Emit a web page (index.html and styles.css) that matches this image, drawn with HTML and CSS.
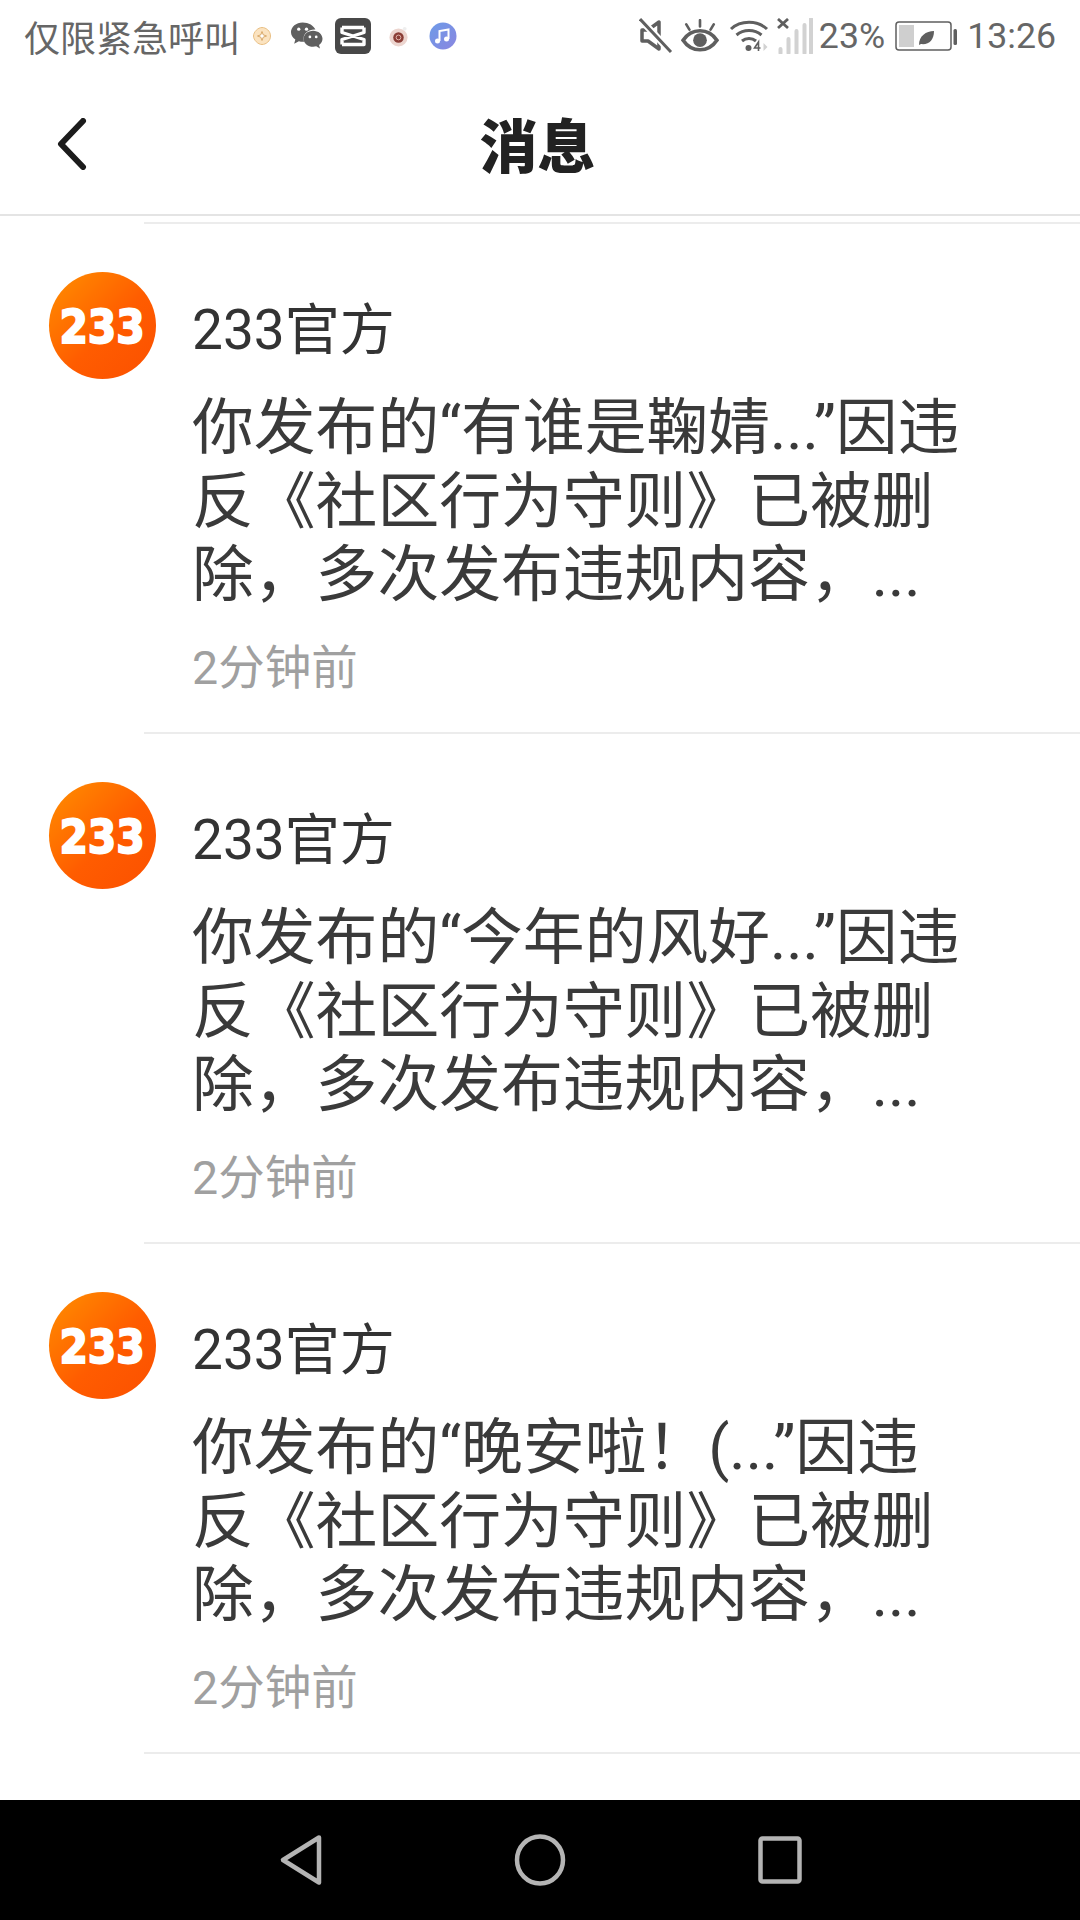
FILE: index.html
```html
<!DOCTYPE html>
<html>

<head>
    <meta charset="UTF-8">
    <meta name="viewport" content="width=device-width, initial-scale=1.0">
    <title>消息</title>
    <link rel="stylesheet" href="styles.css">
</head>

<body>
    <div class="phone">
        <!-- Status bar -->
        <div class="status">
            <div class="status-left">
                <span class="carrier">仅限紧急呼叫</span>
                <svg class="notif coin" viewBox="0 0 20 20">
                    <path d="M10 1.500c4 0 8.500 3.500 8.500 8.500s-4.500 8.500-8.500 8.500S1.500 14 1.500 10 6 1.500 10 1.500z" fill="#fbe3c0" stroke="#e9bf83" stroke-width="1"/>
                    <path d="M10 5.500l1.200 3.300 3.300 1.200-3.300 1.200L10 14.500l-1.200-3.300L5.500 10l3.300-1.200z" fill="#fff" stroke="#d9a867" stroke-width="1"/>
                </svg>
                <svg class="notif wechat" viewBox="0 0 34 30">
                    <path d="M13 1C6.400 1 1 5.400 1 11c0 3.200 1.700 5.800 4.500 7.700L4.300 23l4.900-2.600c1.200.4 2.600.6 3.800.6.500 0 1 0 1.500-.1-.3-1-.5-2-.5-3 0-5.300 4.900-9.500 11-9.500h1.200C24.600 4.300 19.300 1 13 1z" fill="#5f5f5f"/>
                    <path d="M33.500 17.800c0-4.600-4.400-8.300-9.700-8.300s-9.800 3.700-9.800 8.300 4.400 8.300 9.800 8.300c1.100 0 2.200-.2 3.200-.5l3.900 2.200-1-3.600c2.200-1.500 3.600-3.800 3.600-6.400z" fill="#5f5f5f"/>
                    <circle cx="9" cy="8" r="1.700" fill="#fff"/>
                    <circle cx="17" cy="8" r="1.700" fill="#fff"/>
                    <circle cx="20.500" cy="16" r="1.400" fill="#fff"/>
                    <circle cx="27" cy="16" r="1.400" fill="#fff"/>
                </svg>
                <svg class="notif capcut" viewBox="0 0 36 36">
                    <rect width="36" height="36" rx="6" fill="#484848"/>
                    <path d="M7 9.500h22M7 26.500h22v-5L7 14.500v-5M29 9.500v5L7 21.500v5" fill="none" stroke="#fff" stroke-width="3.400" stroke-linejoin="round"/>
                </svg>
                <svg class="notif peach" viewBox="0 0 22 22">
                    <circle cx="11" cy="12" r="9.500" fill="#ecd5cf"/>
                    <circle cx="11" cy="12" r="5.500" fill="#8a3d36"/>
                    <circle cx="11" cy="12" r="2.500" fill="none" stroke="#e3b7ae" stroke-width="1"/>
                    <circle cx="17.500" cy="3" r="2" fill="#eee"/>
                </svg>
                <svg class="notif music" viewBox="0 0 28 28">
                    <defs>
                        <linearGradient id="musicFill" x1="0" y1="0" x2="1" y2="1">
                            <stop offset="0" stop-color="#6d9be8"/>
                            <stop offset="1" stop-color="#8a86e0"/>
                        </linearGradient>
                    </defs>
                    <circle cx="14" cy="14" r="13.500" fill="url(#musicFill)"/>
                    <path d="M10.500 19V9l9-1.500V17" fill="none" stroke="#fff" stroke-width="2"/>
                    <circle cx="8.500" cy="19" r="2.500" fill="#fff"/>
                    <circle cx="17.500" cy="17" r="2.500" fill="#fff"/>
                </svg>
            </div>
            <div class="status-right">
                <svg class="sys mute" viewBox="0 0 34 36">
                    <path d="M3 12h6l11-8v27l-11-8H3z" fill="none" stroke="#5f5f5f" stroke-width="3.500" stroke-linejoin="round"/>
                    <path d="M2 2l30 32" stroke="#fff" stroke-width="7"/>
                    <path d="M1 1l31 33" stroke="#5f5f5f" stroke-width="3"/>
                </svg>
                <svg class="sys eye" viewBox="0 0 36 32">
                    <path d="M2 20c4-6 9.500-9 16-9s12 3 16 9c-4 6-9.500 9-16 9s-12-3-16-9z" fill="none" stroke="#5f5f5f" stroke-width="3.500"/>
                    <circle cx="18" cy="20" r="6.500" fill="#5f5f5f"/>
                    <path d="M18 1v6M5 5l3 5M31 5l-3 5" stroke="#5f5f5f" stroke-width="2.500" stroke-linecap="round"/>
                </svg>
                <svg class="sys wifi" viewBox="0 0 40 34">
                    <path d="M1.500 10C11 1 28 1 37.500 10M7 16c7-6 18-6 25 0M12.500 22c4-3.500 10-3.500 14 0" fill="none" stroke="#5f5f5f" stroke-width="3"/>
                    <circle cx="19" cy="29" r="3" fill="#5f5f5f"/>
                    <path d="M29 32v-9l-4 6h6" fill="none" stroke="#5f5f5f" stroke-width="1.600"/>
                    <path d="M34 24l4 4-4 4z" fill="#d2d2d2"/>
                </svg>
                <svg class="sys signal" viewBox="0 0 36 36">
                    <path d="M1 1l10 9M11 1L1 10" stroke="#5f5f5f" stroke-width="2.800"/>
                    <path d="M3.500 35v-4M11.500 35V21M19.500 35V13M27.500 35V7M34 35V1" stroke="#d2d2d2" stroke-width="4" stroke-linecap="round"/>
                </svg>
                <span class="pct">23%</span>
                <svg class="sys battery" viewBox="0 0 62 30">
                    <rect x="1" y="1" width="55" height="28" rx="3" fill="none" stroke="#5f5f5f" stroke-width="1.500"/>
                    <rect x="4" y="4" width="15" height="22" fill="#cfcfcf"/>
                    <path d="M24 24c0-9 7-14 15-14 0 9-5 14-13 13z" fill="#5f5f5f"/>
                    <rect x="58.500" y="8" width="3.500" height="16" rx="1.500" fill="#5f5f5f"/>
                </svg>
                <span class="clock">13:26</span>
            </div>
        </div>

        <!-- Title bar -->
        <div class="titlebar">
            <svg class="back" viewBox="0 0 32 52">
                <path d="M27 3L5 26l22 23" fill="none" stroke="#1c1c1c" stroke-width="6" stroke-linecap="round" stroke-linejoin="round"/>
            </svg>
            <h1>消息</h1>
        </div>

        <!-- Messages -->
        <div class="list">
            <hr class="rule">

            <div class="item">
                <div class="avatar"><span>233</span></div>
                <div class="content">
                    <div class="name">233官方</div>
                    <div class="body">你发布的“有谁是鞠婧...”因违反《社区行为守则》已被删除，多次发布违规内容，...</div>
                    <div class="time">2分钟前</div>
                </div>
            </div>
            <hr class="rule">

            <div class="item">
                <div class="avatar"><span>233</span></div>
                <div class="content">
                    <div class="name">233官方</div>
                    <div class="body">你发布的“今年的风好...”因违反《社区行为守则》已被删除，多次发布违规内容，...</div>
                    <div class="time">2分钟前</div>
                </div>
            </div>
            <hr class="rule">

            <div class="item">
                <div class="avatar"><span>233</span></div>
                <div class="content">
                    <div class="name">233官方</div>
                    <div class="body">你发布的“晚安啦！(...”因违反《社区行为守则》已被删除，多次发布违规内容，...</div>
                    <div class="time">2分钟前</div>
                </div>
            </div>
            <hr class="rule">
        </div>

        <!-- Navigation bar -->
        <div class="navbar">
            <svg class="nav-icon nav-back" viewBox="0 0 44 52">
                <path d="M40 3.500L4 26l36 22.500z" fill="none" stroke="#b4b4b4" stroke-width="4.500" stroke-linejoin="round"/>
            </svg>
            <svg class="nav-icon nav-home" viewBox="0 0 52 52">
                <ellipse cx="26" cy="26" rx="23" ry="23.500" fill="none" stroke="#b4b4b4" stroke-width="4.500"/>
            </svg>
            <svg class="nav-icon nav-recent" viewBox="0 0 44 48">
                <rect x="2.500" y="2.500" width="39" height="43" rx="2" fill="none" stroke="#b4b4b4" stroke-width="4.500"/>
            </svg>
        </div>
    </div>
</body>

</html>
```

FILE: styles.css
```css
* {
    box-sizing: border-box;
}

html, body {
    margin: 0;
    padding: 0;
    background-color: white;
}

body {
    font-family: 'Roboto', 'Noto Sans CJK SC', sans-serif;
}

.phone {
    width: 1080px;
    height: 1920px;
    display: flex;
    flex-direction: column;
    overflow: hidden;
}

.status {
    height: 72px;
    flex-shrink: 0;
    display: flex;
    align-items: center;
    justify-content: space-between;
    padding: 0 24px;
    color: #666;
}

.status-left, .status-right {
    display: flex;
    align-items: center;
}

.carrier {
    font-size: 36px;
    margin-right: 12px;
}

.notif {
    display: block;
    flex-shrink: 0;
}

.coin { width: 20px; height: 20px; margin-right: 18px; }
.wechat { width: 33px; height: 30px; margin-right: 12px; }
.capcut { width: 36px; height: 36px; margin-right: 17px; }
.peach { width: 21px; height: 21px; margin-right: 20px; }
.music { width: 28px; height: 28px; }

.sys {
    display: block;
    flex-shrink: 0;
}

.mute { width: 34px; height: 36px; margin-right: 8px; }
.eye { width: 38px; height: 34px; margin-right: 10px; }
.wifi { width: 41px; height: 34px; margin-right: 7px; }
.signal { width: 36px; height: 36px; margin-right: 6px; }
.battery { width: 62px; height: 30px; margin-left: 10px; margin-right: 10px; }

.pct, .clock {
    font-family: 'Roboto', sans-serif;
    font-size: 35.7px;
}

.titlebar {
    height: 144px;
    flex-shrink: 0;
    display: flex;
    align-items: center;
    justify-content: center;
    position: relative;
    border-bottom: 2px solid #e4e4e4;
}

.back {
    position: absolute;
    left: 56px;
    top: 46px;
    width: 32px;
    height: 52px;
}

h1 {
    margin: 0;
    padding: 0 5px 0 0;
    font-size: 58px;
    font-weight: 900;
    color: #222;
}

.list {
    flex: 1;
    padding-top: 6px;
    min-height: 0;
}

.rule {
    margin: 0 0 0 144px;
    height: 2px;
    border: none;
    background-color: #ececec;
}

.item {
    height: 508px;
    padding: 48px 0 0 49px;
    display: flex;
    gap: 36px;
}

.avatar {
    width: 107px;
    height: 107px;
    flex-shrink: 0;
    border-radius: 50%;
    background: linear-gradient(135deg, #ff8600 10%, #ff5c00 55%, #fb5000);
    display: flex;
    align-items: center;
    justify-content: center;
}

.avatar span {
    font-family: 'DejaVu Sans', sans-serif;
    font-size: 47px;
    font-weight: 700;
    padding: 2px 0 0 0;
    transform: scaleX(0.87);
    color: white;
    -webkit-text-stroke: 2px white;
}

.content {
    width: 778px;
}

.name {
    font-size: 55px;
    line-height: 72px;
    color: #333;
    margin-top: 22px;
}

.body {
    font-size: 61.8px;
    line-height: 73.5px;
    color: #3a3a3a;
    margin-top: 26px;
}

.time {
    font-size: 46.5px;
    line-height: 60px;
    color: #a0a0a0;
    margin-top: 25px;
}

.navbar {
    height: 120px;
    flex-shrink: 0;
    background-color: black;
    display: flex;
    align-items: center;
    padding-left: 279px;
}

.nav-icon {
    display: block;
    height: 52px;
}

.nav-back { width: 44px; margin-right: 191px; }
.nav-home { width: 52px; margin-right: 192px; }
.nav-recent { width: 44px; }
```
